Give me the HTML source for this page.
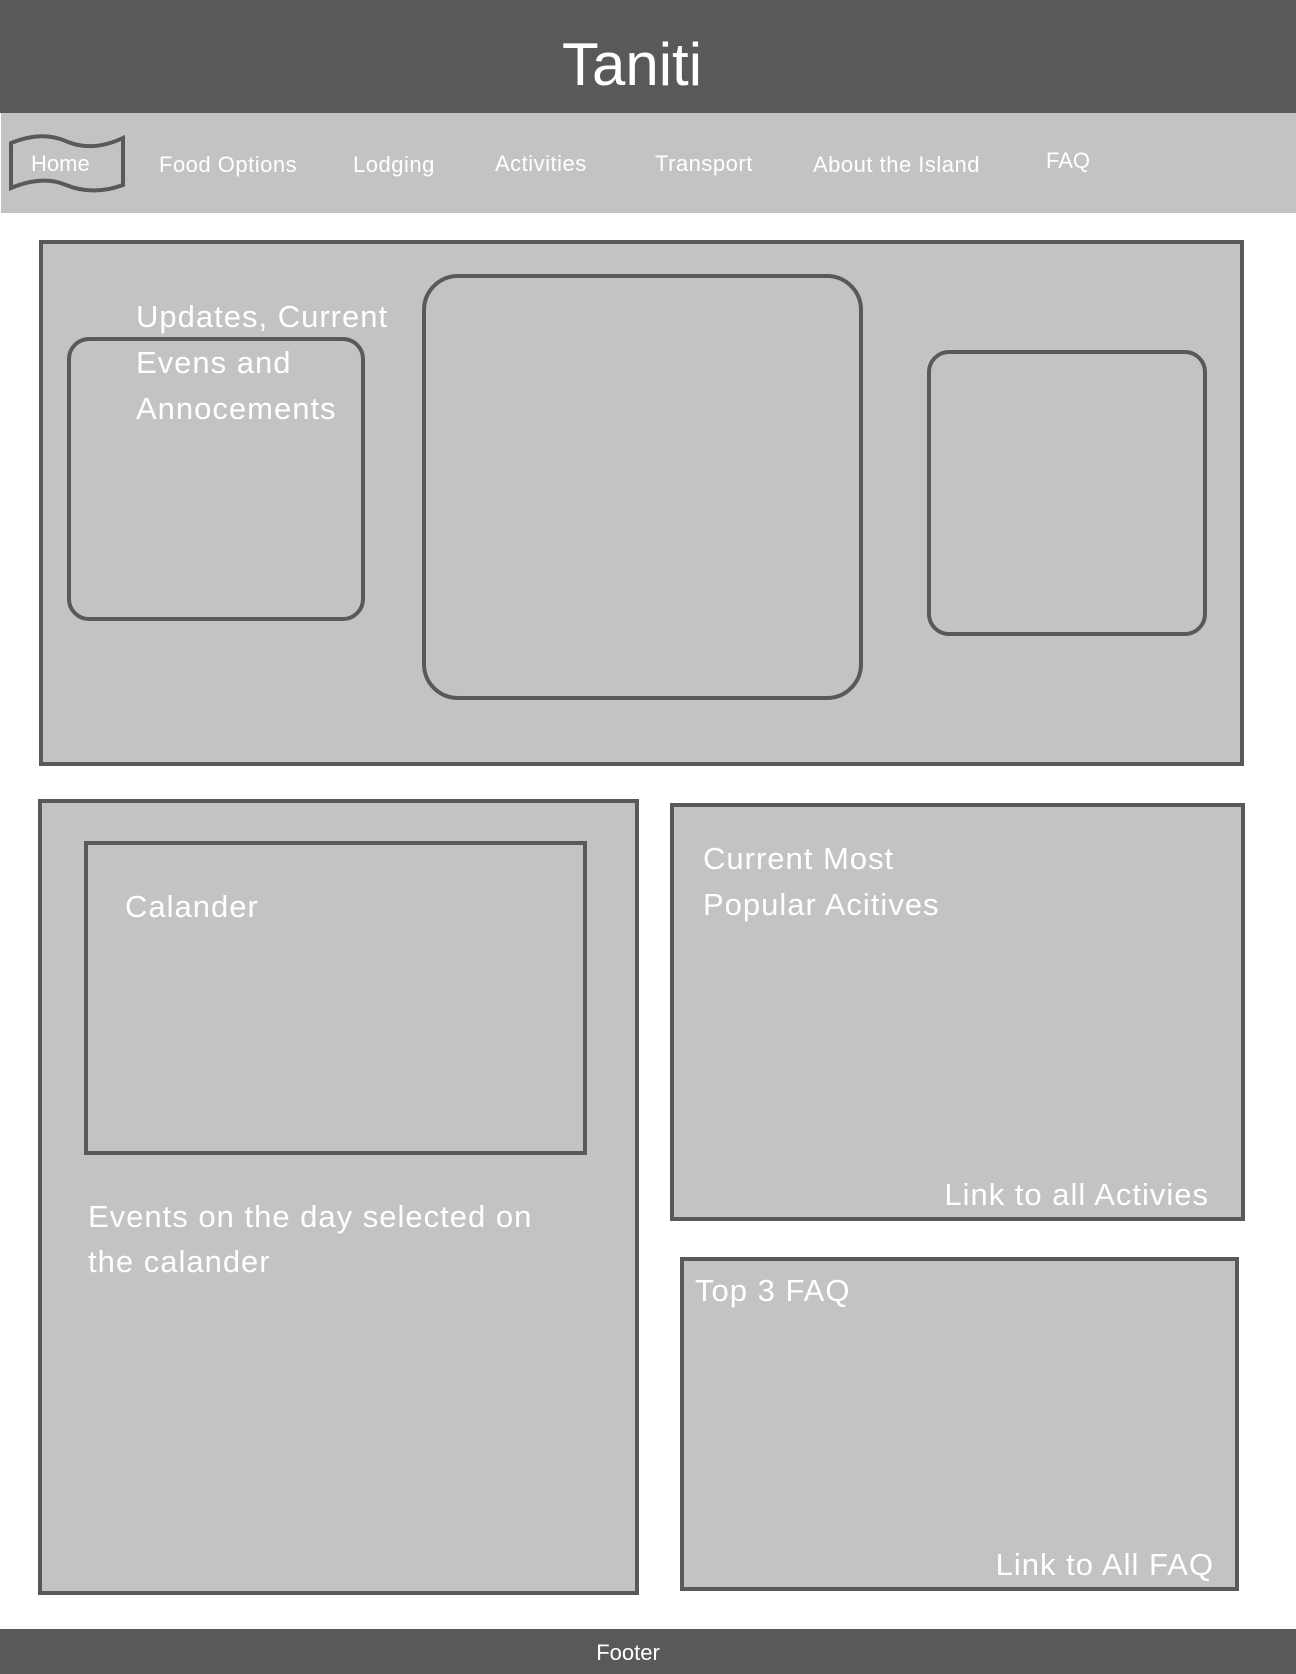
<!DOCTYPE html>
<html><head><meta charset="utf-8"><style>
*{margin:0;padding:0;box-sizing:border-box}
body{width:1296px;height:1674px;position:relative;background:#fff;font-family:"Liberation Sans",sans-serif;color:#fff;overflow:hidden}
.a{position:absolute}
.t{position:absolute;white-space:nowrap;line-height:1}
.l{letter-spacing:1px}
.b{position:absolute;background:#c3c3c3;border:3px solid #595959}
.r{position:absolute;border:4px solid #595959}
</style></head><body>
<div class="a" style="left:0;top:0;width:1296px;height:113px;background:#595959"></div>
<div class="t" style="left:0;width:1264px;text-align:center;top:35px;font-size:60px">Taniti</div>
<div class="a" style="left:1px;top:113px;width:1295px;height:100px;background:#c3c3c3"></div>
<svg class="a" style="left:8px;top:134px" width="120" height="62"><path d="M3 9 Q35 -4 60 8 Q85 18 115 4 L115 51 Q85 62 58 51 Q35 41 3 54 Z" fill="none" stroke="#595959" stroke-width="4"/></svg>
<div class="t" style="left:31px;top:153px;font-size:22px">Home</div>
<div class="t" style="left:159px;top:154px;font-size:22px;letter-spacing:.5px">Food Options</div>
<div class="t" style="left:353px;top:154px;font-size:22px;letter-spacing:.5px">Lodging</div>
<div class="t" style="left:495px;top:153px;font-size:22px;letter-spacing:.5px">Activities</div>
<div class="t" style="left:655px;top:153px;font-size:22px;letter-spacing:.5px">Transport</div>
<div class="t" style="left:813px;top:154px;font-size:22px;letter-spacing:.5px">About the Island</div>
<div class="t" style="left:1046px;top:150px;font-size:22px">FAQ</div>

<div class="b" style="left:39px;top:240px;width:1205px;height:526px;border-width:4px"></div>
<div class="r" style="left:67px;top:337px;width:298px;height:284px;border-radius:22px"></div>
<div class="r" style="left:422px;top:274px;width:441px;height:426px;border-radius:36px"></div>
<div class="r" style="left:927px;top:350px;width:280px;height:286px;border-radius:22px"></div>
<div class="t l" style="left:136px;top:294px;font-size:31px;line-height:46px;white-space:normal;width:320px">Updates, Current<br>Evens and<br>Annocements</div>

<div class="b" style="left:38px;top:799px;width:601px;height:796px;border-width:4px"></div>
<div class="r" style="left:84px;top:841px;width:503px;height:314px"></div>
<div class="t l" style="left:125px;top:891px;font-size:31px">Calander</div>
<div class="t l" style="left:88px;top:1194px;font-size:31px;line-height:45px">Events on the day selected on<br>the calander</div>

<div class="b" style="left:670px;top:803px;width:575px;height:418px;border-width:4px"></div>
<div class="t l" style="left:703px;top:836px;font-size:31px;line-height:46px">Current Most<br>Popular Acitives</div>
<div class="t l" style="right:87px;top:1179px;font-size:31px">Link to all Activies</div>

<div class="b" style="left:680px;top:1257px;width:559px;height:334px;border-width:4px"></div>
<div class="t l" style="left:695px;top:1275px;font-size:31px">Top 3 FAQ</div>
<div class="t l" style="right:82px;top:1549px;font-size:31px">Link to All FAQ</div>

<div class="a" style="left:0;top:1629px;width:1296px;height:45px;background:#595959"></div>
<div class="t" style="left:0;width:1256px;text-align:center;top:1642px;font-size:22px">Footer</div>
</body></html>
